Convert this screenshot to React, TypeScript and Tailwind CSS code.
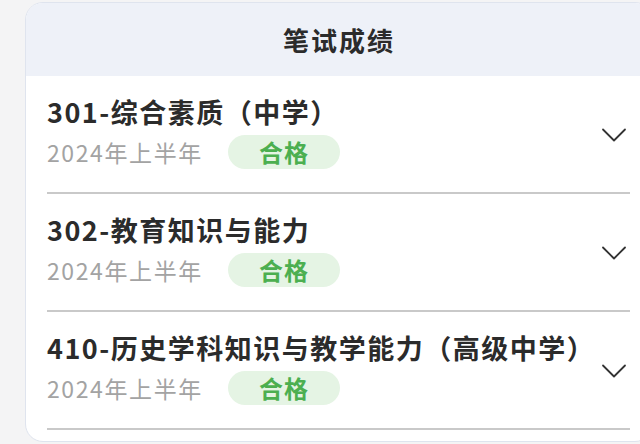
const results = [
  { code: '301', name: '综合素质（中学）', term: '2024年上半年', status: '合格' },
  { code: '302', name: '教育知识与能力', term: '2024年上半年', status: '合格' },
  { code: '410', name: '历史学科知识与教学能力（高级中学）', term: '2024年上半年', status: '合格' },
];

function Chevron() {
  return (
    <svg width="26" height="16" viewBox="0 0 26 16" fill="none" className="shrink-0">
      <path d="M2 2.5 L13 13.5 L24 2.5" stroke="#333" strokeWidth="1.8" strokeLinecap="round" strokeLinejoin="round" />
    </svg>
  );
}

export default function App() {
  return (
    <div
      className="w-[640px] h-[444px] overflow-hidden bg-[#f4f4f5] pt-[2px] pl-[25px]"
      style={{ fontFamily: '"PingFang SC", "Noto Sans CJK SC", "Noto Sans", sans-serif' }}
    >
      <div className="w-[628px] h-[440px] rounded-[18px] border border-[#dfe4ee] bg-white overflow-hidden">
        <div className="h-[73px] bg-[#eef1f8] flex items-center justify-center">
          <h1 className="text-[26px] font-bold text-[#2b2b2b] tracking-[2px]">笔试成绩</h1>
        </div>
        <div className="pl-[21px] pr-[22px]">
          {results.map((r) => (
            <div key={r.code} className="border-b-2 border-[#c9c9c9] pt-[17px] pb-[20px] flex items-center justify-between">
              <div className="flex flex-col gap-[1px]">
                <div className="text-[27px] leading-[38px] font-bold text-[#2b2b2b] tracking-[1.5px]">
                  {r.code}-{r.name}
                </div>
                <div className="flex items-center h-[40px]">
                  <span className="text-[23px] text-[#a3a3a3] tracking-[1.6px] w-[181px]">{r.term}</span>
                  <span className="w-[112px] h-[34px] rounded-full bg-[#e5f4e4] text-[#4caf50] text-[24px] font-bold flex items-center justify-center tracking-[1px]">
                    {r.status}
                  </span>
                </div>
              </div>
              <div className="mr-[3px] mt-[4px]">
                <Chevron />
              </div>
            </div>
          ))}
        </div>
      </div>
    </div>
  );
}
